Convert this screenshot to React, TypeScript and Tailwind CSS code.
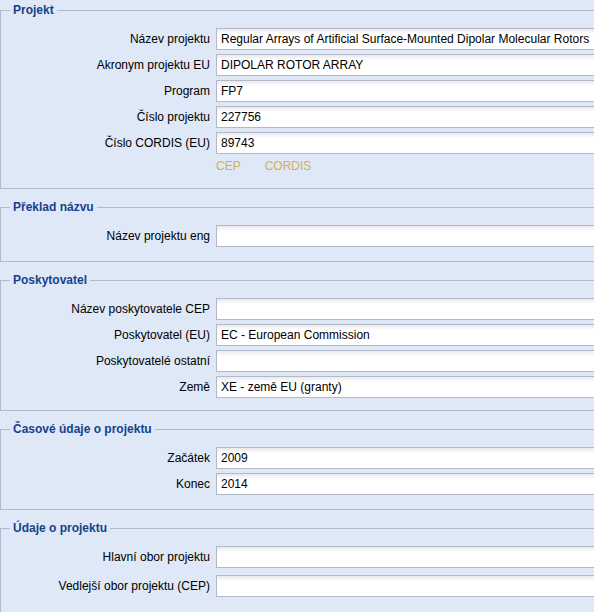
const font = { fontFamily: '"Liberation Sans", Arial, sans-serif' };

type Field = { label: string; value?: string };

const sections: { title: string; fields: Field[]; links?: string[]; rowGap?: string; pb: string }[] = [
  {
    title: 'Projekt',
    fields: [
      { label: 'Název projektu', value: 'Regular Arrays of Artificial Surface-Mounted Dipolar Molecular Rotors' },
      { label: 'Akronym projektu EU', value: 'DIPOLAR ROTOR ARRAY' },
      { label: 'Program', value: 'FP7' },
      { label: 'Číslo projektu', value: '227756' },
      { label: 'Číslo CORDIS (EU)', value: '89743' },
    ],
    links: ['CEP', 'CORDIS'],
    pb: 'pb-[14px]',
  },
  {
    title: 'Překlad názvu',
    fields: [{ label: 'Název projektu eng' }],
    pb: 'pb-[14px]',
  },
  {
    title: 'Poskytovatel',
    fields: [
      { label: 'Název poskytovatele CEP' },
      { label: 'Poskytovatel (EU)', value: 'EC - European Commission' },
      { label: 'Poskytovatelé ostatní' },
      { label: 'Země', value: 'XE - země EU (granty)' },
    ],
    pb: 'pb-[12px]',
  },
  {
    title: 'Časové údaje o projektu',
    fields: [
      { label: 'Začátek', value: '2009' },
      { label: 'Konec', value: '2014' },
    ],
    pb: 'pb-[14px]',
  },
  {
    title: 'Údaje o projektu',
    fields: [{ label: 'Hlavní obor projektu' }, { label: 'Vedlejší obor projektu (CEP)' }],
    rowGap: 'gap-[7px]',
    pb: 'pb-[16px]',
  },
];

function Row({ field }: { field: Field }) {
  return (
    <div className="flex items-center gap-[6px] h-[22px]">
      <label className="w-[200px] shrink-0 text-right text-[12px] text-black">{field.label}</label>
      <input
        type="text"
        readOnly
        defaultValue={field.value ?? ''}
        className="flex-1 h-[22px] border border-[#b5b8c8] bg-[linear-gradient(to_bottom,#e9e9e9,#ffffff_5px)] px-[4px] text-[12px] text-black outline-none"
      />
    </div>
  );
}

export default function App() {
  return (
    <div className="w-[594px] h-[612px] overflow-hidden bg-[#dfe8f6]" style={font}>
      <div className="w-[660px] flex flex-col gap-[8px]">
        {sections.map((s) => (
          <fieldset key={s.title} className={`border border-[#b5b8c8] pl-[9px] pr-[9px] pt-[8px] ${s.pb}`}>
            <legend className="px-[3px] h-[20px] leading-[20px] text-[12px] font-bold text-[#15428b]">{s.title}</legend>
            <div className={`flex flex-col ${s.rowGap ?? 'gap-[4px]'}`}>
              {s.fields.map((f) => (
                <Row key={f.label} field={f} />
              ))}
              {s.links && (
                <div className="flex h-[16px] items-center gap-[24px] pl-[206px] text-[12px] text-[#d6ac58]">
                  {s.links.map((l) => (
                    <span key={l}>{l}</span>
                  ))}
                </div>
              )}
            </div>
          </fieldset>
        ))}
      </div>
    </div>
  );
}
